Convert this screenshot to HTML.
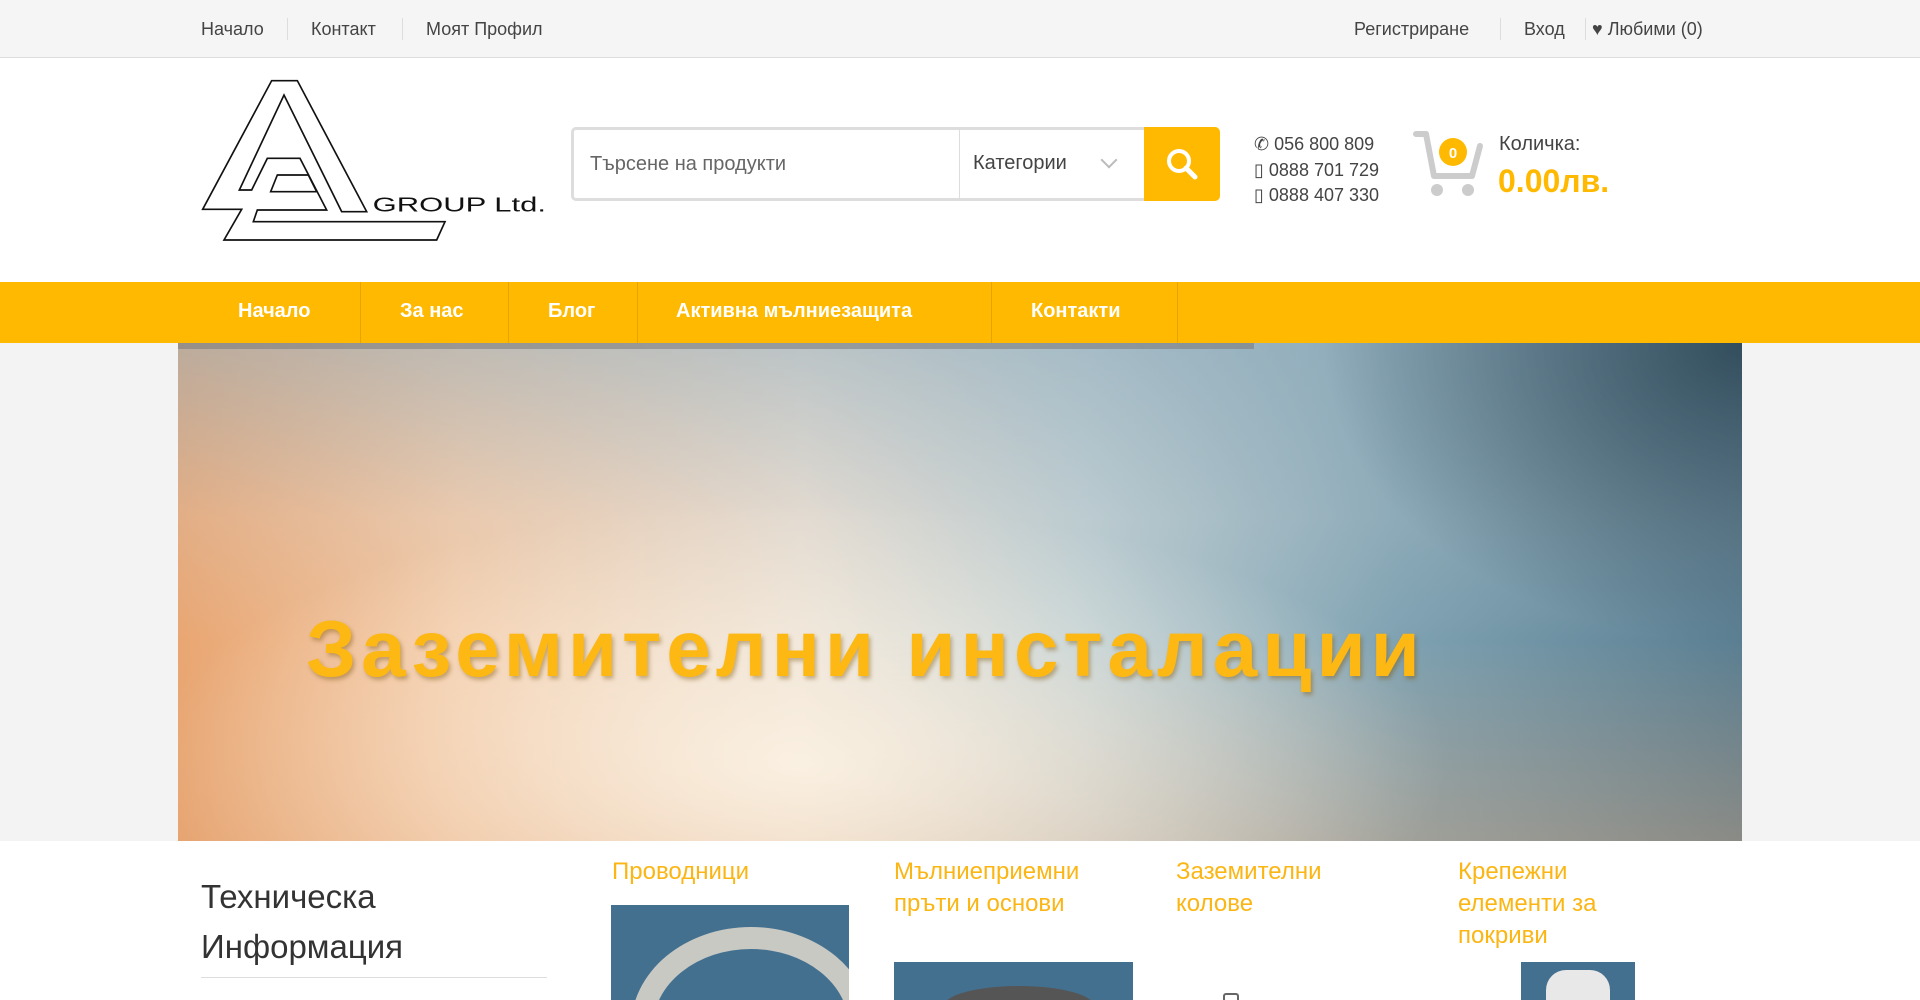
<!DOCTYPE html>
<html><head><meta charset="utf-8"><style>
*{margin:0;padding:0;box-sizing:border-box}
body{width:1920px;height:1000px;overflow:hidden;background:#fff;font-family:"Liberation Sans","DejaVu Sans",sans-serif;color:#333;position:relative}
.a{position:absolute}
.top{left:0;top:0;width:1920px;height:58px;background:#f5f5f5;border-bottom:1px solid #ddd}
.top span{position:absolute;top:19px;font-size:18px;color:#444}
.sep{position:absolute;top:18px;width:1px;height:22px;background:#ddd}
.nav{left:0;top:282px;width:1920px;height:61px;background:#ffb900}
.nav span{position:absolute;top:18px;font-size:20px;font-weight:bold;color:#fff}
.nav i{position:absolute;top:0;width:1px;height:61px;background:#e5a400}
.title{font-size:24px;color:#fbb614;line-height:32px;position:absolute;top:856px}
</style></head><body>
<div class="a top">
<span style="left:201px">Начало</span><div class="sep" style="left:287px"></div>
<span style="left:311px">Контакт</span><div class="sep" style="left:402px"></div>
<span style="left:426px">Моят Профил</span>
<span style="left:1354px">Регистриране</span><div class="sep" style="left:1500px"></div>
<span style="left:1524px">Вход</span><div class="sep" style="left:1585px"></div>
<span style="left:1592px">♥ Любими (0)</span>
</div>
<svg class="a" style="left:180px;top:60px" width="400" height="200" viewBox="0 0 1200 600" fill="none" stroke="#111" stroke-width="5" stroke-linejoin="miter">
<path d="M275,62 H352 L560,455 H485 L312,105 L178,390 H215 L262,295 H360 L440,450 H232 L220,485 H795 L770,540 H132 L185,448 H68 Z"/>
<path d="M292,345 L272,395 H410 L385,345 Z"/>
<text x="578" y="455" font-family="Liberation Sans" font-size="60" fill="#111" stroke="none" textLength="520" lengthAdjust="spacingAndGlyphs">GROUP Ltd.</text>
</svg>
<div class="a" style="left:571px;top:127px;width:575px;height:74px;border:3px solid #ddd;border-right:none;border-radius:5px 0 0 5px"></div>
<div class="a" style="left:590px;top:153px;font-size:20px;color:#666">Търсене на продукти</div>
<div class="a" style="left:959px;top:130px;width:1px;height:68px;background:#ddd"></div>
<div class="a" style="left:973px;top:152px;font-size:20px;color:#444">Категории</div>
<div class="a" style="left:1103px;top:154px;width:12px;height:12px;border-right:2px solid #bbb;border-bottom:2px solid #bbb;transform:rotate(45deg)"></div>
<div class="a" style="left:1144px;top:127px;width:76px;height:74px;background:#ffb900;border-radius:0 5px 5px 0"></div>
<svg class="a" style="left:1164px;top:146px" width="36" height="36" viewBox="0 0 36 36"><circle cx="15" cy="15" r="10" fill="none" stroke="#fff" stroke-width="4"/><path d="M22 22 L31 31" stroke="#fff" stroke-width="5" stroke-linecap="round"/></svg>
<div class="a" style="left:1254px;top:132px;font-size:18px;color:#444;line-height:25.5px">
<div>✆ 056 800 809</div><div>▯ 0888 701 729</div><div>▯ 0888 407 330</div></div>
<svg class="a" style="left:1412px;top:128px" width="74" height="72" viewBox="0 0 74 72"><path d="M4 6 H14 L22 48 H60 L68 18" fill="none" stroke="#ccc" stroke-width="6" stroke-linecap="round" stroke-linejoin="round"/><circle cx="25" cy="62" r="6" fill="#ccc"/><circle cx="56" cy="62" r="6" fill="#ccc"/><circle cx="41" cy="24" r="14" fill="#ffb900"/><text x="41" y="30" text-anchor="middle" font-size="15" font-weight="bold" fill="#fff" font-family="Liberation Sans">0</text></svg>
<div class="a" style="left:1499px;top:133px;font-size:20px;color:#444">Количка:</div>
<div class="a" style="left:1498px;top:163px;font-size:32px;font-weight:bold;color:#ffb900">0.00лв.</div>
<div class="a nav">
<span style="left:238px">Начало</span><i style="left:360px"></i>
<span style="left:400px">За нас</span><i style="left:508px"></i>
<span style="left:548px">Блог</span><i style="left:637px"></i>
<span style="left:676px">Активна мълниезащита</span><i style="left:991px"></i>
<span style="left:1031px">Контакти</span><i style="left:1177px"></i>
</div>
<div class="a" style="left:0;top:343px;width:1920px;height:498px;background:#f3f3f3"></div>
<div class="a" style="left:178px;top:343px;width:1564px;height:498px;overflow:hidden;background:linear-gradient(90deg,#e9a672 0%,#f2c9a6 18%,#e8ddd0 40%,#b9cbd0 58%,#7fa2b2 78%,#5b7f92 100%)">
<div style="position:absolute;left:0;top:0;width:100%;height:100%;background:linear-gradient(180deg,rgba(150,175,190,.55) 0%,rgba(200,205,210,.2) 35%,rgba(255,230,200,0) 60%,rgba(225,160,110,.35) 100%)"></div>
<div style="position:absolute;left:0;top:0;width:100%;height:100%;background:radial-gradient(ellipse 650px 260px at 620px 420px,rgba(255,248,235,.8),rgba(255,240,220,0) 100%)"></div>
<div style="position:absolute;left:0;top:0;width:100%;height:100%;background:radial-gradient(ellipse 420px 300px at 1564px 0px,rgba(20,45,60,.7),rgba(20,45,60,0) 100%)"></div>
</div>
<div class="a" style="left:178px;top:343px;width:1076px;height:6px;background:rgba(120,120,120,.55)"></div>
<div class="a" style="left:306px;top:603px;font-size:80px;font-weight:bold;color:#fdb813;text-shadow:2px 3px 4px rgba(120,80,0,.4);letter-spacing:5px">Заземителни инсталации</div>
<div class="a" style="left:201px;top:872px;font-size:33px;line-height:50px;color:#333">Техническа<br>Информация</div>
<div class="a" style="left:201px;top:977px;width:346px;height:1px;background:#ddd"></div>
<div class="title" style="left:612px">Проводници</div>
<div class="title" style="left:894px">Мълниеприемни<br>пръти и основи</div>
<div class="title" style="left:1176px">Заземителни<br>колове</div>
<div class="title" style="left:1458px">Крепежни<br>елементи за<br>покриви</div>
<div class="a" style="left:611px;top:905px;width:238px;height:95px;background:#44708f;overflow:hidden"><div style="position:absolute;left:20px;top:22px;width:240px;height:200px;border:22px solid #c9c9c4;border-radius:50%"></div></div>
<div class="a" style="left:894px;top:962px;width:239px;height:38px;background:#44708f;overflow:hidden"><div style="position:absolute;left:50px;top:24px;width:150px;height:40px;background:#555;border-radius:50%"></div></div>
<div class="a" style="left:1223px;top:993px;width:16px;height:7px;border:2px solid #666;border-bottom:none;border-radius:3px 3px 0 0"></div>
<div class="a" style="left:1521px;top:962px;width:114px;height:38px;background:#44708f;overflow:hidden"><div style="position:absolute;left:25px;top:8px;width:64px;height:40px;background:#e8e8e8;border-radius:20px 20px 0 0"></div></div>
</body></html>
